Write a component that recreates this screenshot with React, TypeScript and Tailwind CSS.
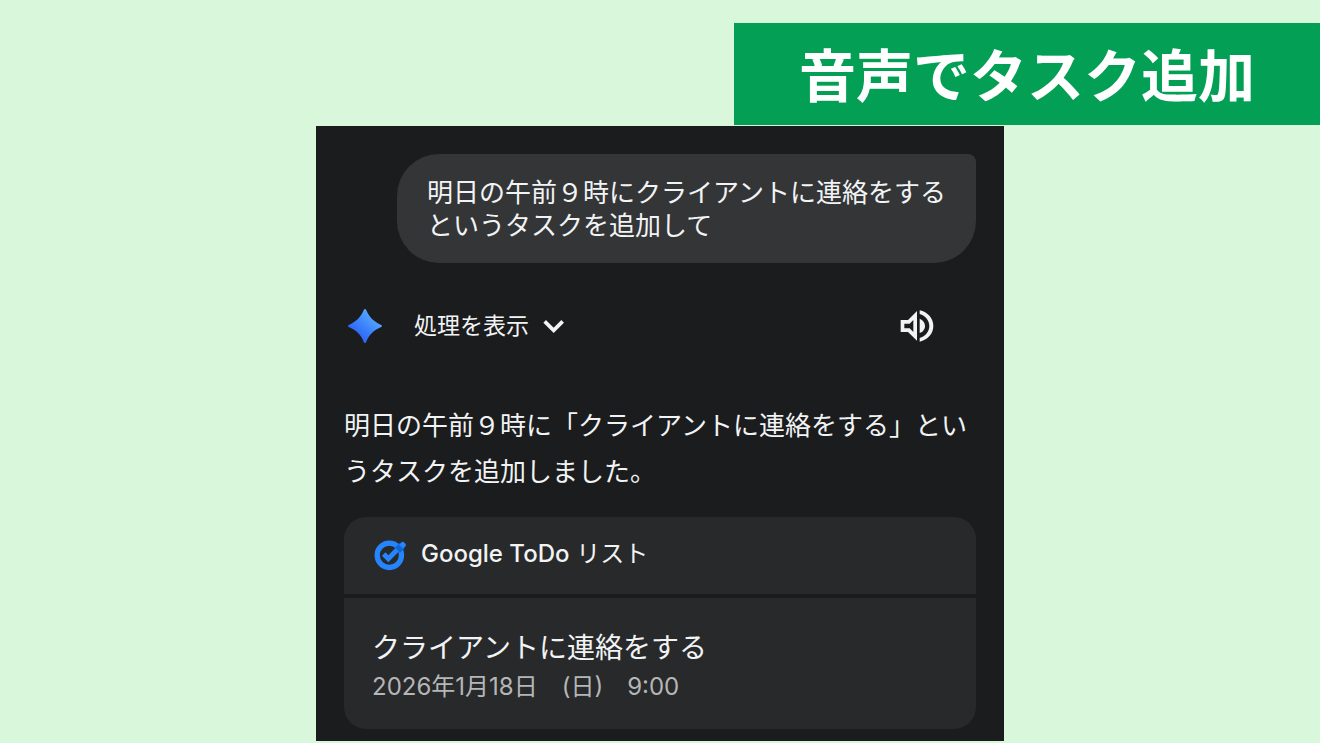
type Task = {
  title: string;
  date: string;
};

const task: Task = {
  title: "クライアントに連絡をする",
  date: "2026年1月18日　(日)　9:00",
};

function Sparkle() {
  return (
    <svg viewBox="0 0 102 102" className="h-[34px] w-[34px] shrink-0" aria-hidden="true">
      <defs>
        <linearGradient id="sparkle" x1="0.2" y1="0.8" x2="0.75" y2="0.2">
          <stop offset="0" stopColor="#2a62f4" />
          <stop offset="0.5" stopColor="#3c83fb" />
          <stop offset="1" stopColor="#58a6ff" />
        </linearGradient>
      </defs>
      <path
        fill="url(#sparkle)"
        d="M51 0C53 0 54 2 55 4C64 25 77 38 98 47C100 48 102 49 102 51C102 53 100 54 98 55C77 64 64 77 55 98C54 100 53 102 51 102C49 102 48 100 47 98C38 77 25 64 4 55C2 54 0 53 0 51C0 49 2 48 4 47C25 38 38 25 47 4C48 2 49 0 51 0Z"
      />
    </svg>
  );
}

function Chevron() {
  return (
    <svg viewBox="0 0 66 42" className="h-[14px] w-[22px]" fill="none" aria-hidden="true">
      <path d="M5 7L32 34L59 7" stroke="#f1f3f4" strokeWidth="11" />
    </svg>
  );
}

function Speaker() {
  return (
    <svg viewBox="60 45 102 96" className="h-8 w-[34px]" aria-hidden="true">
      <path
        fill="#f1f3f4"
        fillRule="evenodd"
        d="M62 75H84L111 48V137L84 111H62ZM73 86V100H89L100 111V75L89 86Z"
      />
      <path fill="#f1f3f4" d="M119 71C129 75 135 84 135 93C135 102 129 111 119 114Z" />
      <path
        fill="#f1f3f4"
        d="M119 46C143 51 160 70 160 93C160 116 143 135 119 140V129C136 124 148 110 148 93C148 76 136 62 119 57Z"
      />
    </svg>
  );
}

function TasksLogo() {
  return (
    <svg viewBox="27 24 99 93" className="h-[31px] w-[33px] shrink-0" fill="none" aria-hidden="true">
      <circle cx="73" cy="70" r="36.5" stroke="#2684fc" strokeWidth="16" />
      <path d="M56 66L70 80L98 52" stroke="#2684fc" strokeWidth="15" />
      <path d="M90 47L104 33L119 48L105 62Z" fill="#0b66da" />
      <path d="M102 38L110 30Q113 28 116 30L122 36Q124 39 122 42L114 50Z" fill="#2684fc" />
    </svg>
  );
}

export default function App() {
  return (
    <div
      lang="ja"
      className="flex min-h-screen flex-col bg-[#d9f7da] font-['Inter','Noto_Sans_CJK_JP',sans-serif]"
    >
      <header className="mt-[23px] flex w-[44.4%] justify-center self-end bg-[#029f55] pt-[13px] pb-[7px]">
        <h1 className="text-[57px] leading-[82px] font-bold whitespace-nowrap text-white">
          音声でタスク追加
        </h1>
      </header>

      <main className="mx-auto mt-px w-full max-w-[688px] bg-[#1b1c1e] px-7 pt-7 pb-3 text-[#f1f3f4]">
        <div className="flex justify-end">
          <p className="rounded-[42px] rounded-tr-lg bg-[#343537] px-[30px] pt-[22px] pb-[21px] text-[26px] leading-[33px]">
            明日の午前９時にクライアントに連絡をする
            <br />
            というタスクを追加して
          </p>
        </div>

        <div className="mt-[45px] flex h-9 items-center justify-between pr-[42px] pl-1">
          <div className="flex items-center gap-8">
            <Sparkle />
            <button type="button" className="flex items-center gap-[14px] text-[23px] leading-9">
              処理を表示
              <Chevron />
            </button>
          </div>
          <button type="button" aria-label="読み上げる">
            <Speaker />
          </button>
        </div>

        <p className="mt-[59px] text-[26px] leading-[46px]">
          明日の午前９時に「クライアントに連絡をする」というタスクを追加しました。
        </p>

        <section className="mt-[22px] flex flex-col gap-1 overflow-hidden rounded-[22px]">
          <div className="flex h-[77px] items-center gap-[14px] bg-[#28292b] px-[30px]">
            <TasksLogo />
            <h2 className="pb-1 text-2xl">
              <span className="font-medium">Google ToDo</span> リスト
            </h2>
          </div>
          <div className="bg-[#28292b] px-7 pt-[30px] pb-[23px]">
            <p className="text-[28px] leading-10">{task.title}</p>
            <p className="text-2xl leading-[38px] text-[#b5b6b7]">{task.date}</p>
          </div>
        </section>
      </main>
    </div>
  );
}
